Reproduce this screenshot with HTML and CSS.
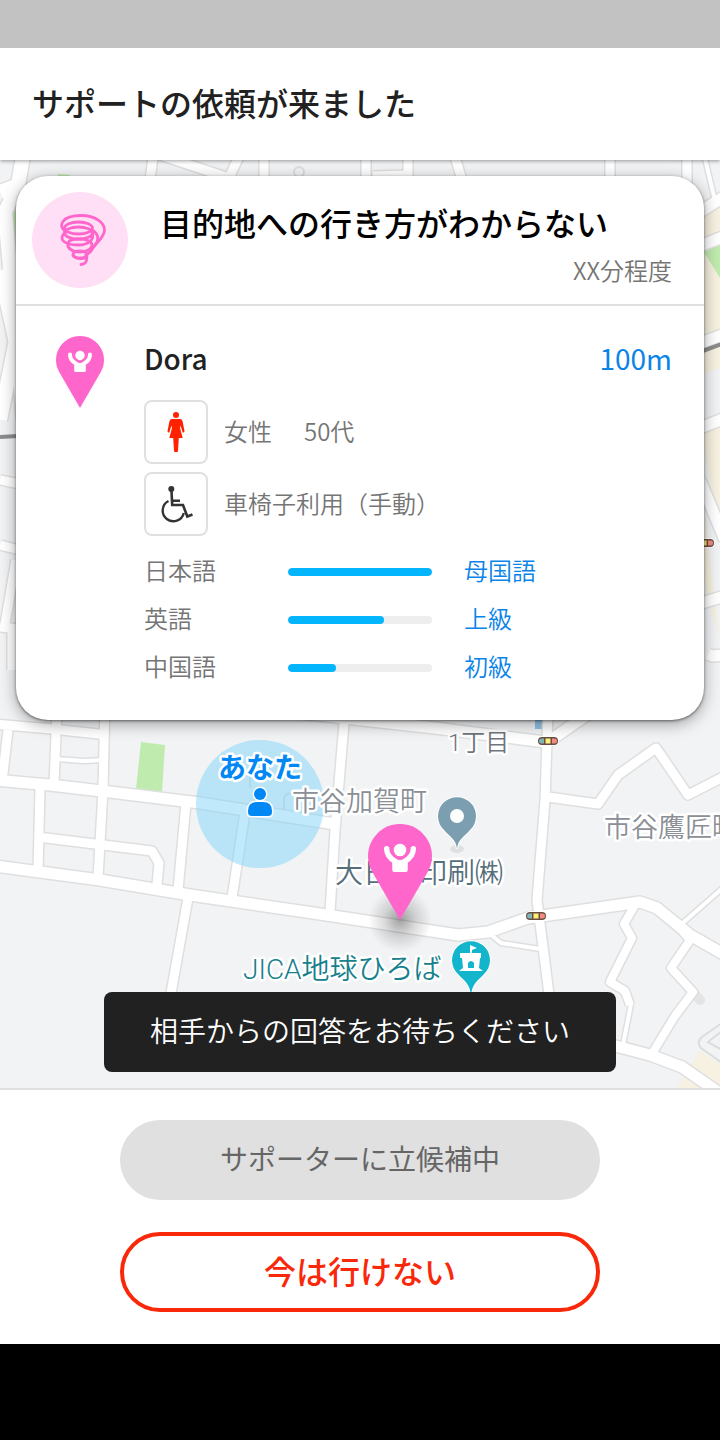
FILE: index.html
```html
<!DOCTYPE html>
<html lang="ja">
<head>
  <meta charset="UTF-8">
  <meta name="viewport" content="width=device-width, initial-scale=1">
  <title>サポートの依頼</title>
  <link rel="stylesheet" href="styles.css">
</head>
<body>
  <div class="status-bar"></div>
  <header class="app-bar">
    <h1>サポートの依頼が来ました</h1>
  </header>

  <main class="map">
    <svg class="map-canvas" viewBox="0 160 720 928" preserveAspectRatio="xMidYMid slice">
      <defs>
        <radialGradient id="pinShadow">
          <stop offset="0" stop-color="#000" stop-opacity=".36"/>
          <stop offset=".5" stop-color="#000" stop-opacity=".14"/>
          <stop offset="1" stop-color="#000" stop-opacity="0"/>
        </radialGradient>
        <symbol id="pin" viewBox="0 0 48 72">
          <path d="M3.2 36A24 24 0 1 1 44.8 36L24 72Z" fill="#ff66cc"/>
          <circle cx="24" cy="19.5" r="4.7" fill="#fff"/>
          <path d="M14 18.5C14 23.5 17 26 20.5 28M34 18.5C34 23.5 31 26 27.5 28" fill="none" stroke="#fff" stroke-width="4" stroke-linecap="round"/>
          <path d="M18.2 26Q24 28 29.8 26V34.5Q29.8 36 28.3 36H19.7Q18.2 36 18.2 34.5Z" fill="#fff"/>
        </symbol>
        <g id="signal">
          <rect x="-10" y="-4" width="20" height="8" rx="4" fill="#6b4c40" stroke="#fff" stroke-width="2" paint-order="stroke"/>
          <path d="M-4 -2.5H-6.5A2.5 2.5 0 0 0 -6.5 2.5H-4Z" fill="#80b5b5"/>
          <rect x="-2.5" y="-2.5" width="5" height="5" fill="#fff176"/>
          <path d="M4 -2.5H6.5A2.5 2.5 0 0 1 6.5 2.5H4Z" fill="#f28b82"/>
        </g>
        <g id="roads">
          <!-- upper edge -->
          <path class="w16" d="M24 150L18 185L5 212L24 420M0 192L16 186M0 270L24 380M24 300L0 420"/>
          <path class="w10" d="M154 150L150 180M160 155L235 180M242 150L228 180M264 150V180M366 150V180M408 150V180M373 176L408 175M453 150L462 180M610 150V180M687 150V200"/>
          <path class="w5" d="M703 150L716 205"/>
          <path class="w12" d="M695 215L725 196M695 248L725 236M695 345L725 334M695 430L725 418M700 480L725 540M695 605L725 596"/>
          <path class="w12" d="M708 654L712 656L725 655"/>
          <path class="w10" d="M0 480L20 484M0 545L20 550M16 560L4 630M0 627L20 629M12 632V670"/>
          <!-- left blocks -->
          <path class="w10" d="M-5 724L52 729L108 735M8 730L2 782M57 710L54 785M105 700L103 790L98 878"/>
          <path class="w5" d="M56 759L84 761L104 760"/>
          <path class="w10" d="M40 788L38 870M38 837L152 851L159 863L157 885"/>
          <path class="w10" d="M186 803L178 890M245 812L232 898M346 700L335 830L330 912M188 898L168 1010"/>
          <path class="w12" d="M-5 780L50 785L110 792L200 803L335 824"/>
          <path class="w12" d="M-5 866L100 880L190 895L320 914L458 935L488 932L528 918L640 902L657 908L690 935L725 955"/>
          <!-- right blocks -->
          <path class="w12" d="M290 712L435 728L545 742M548 742L588 714"/>
          <path class="w10" d="M548 710L545 800L537 900L551 1010"/>
          <path class="w10" d="M548 797L598 804L618 775L656 748L688 795L725 776"/>
          <path class="w5" d="M490 934L501 943L540 949M725 886L677 928L690 943M631 1004L623 1045"/>
          <path class="w8" d="M635 905L624 924L632 938L610 982L625 991L630 1005M690 940L671 968L693 992L675 1016L653 1052"/>
          <path class="w12" d="M600 1042L650 1055L682 1067L725 1097"/>
        </g>
      </defs>

      <rect y="160" width="720" height="928" fill="#f1f3f5"/>
      <path class="field" d="M700 205L720 195V425L700 430ZM700 430L720 427V530ZM700 480L720 640L700 570ZM700 1051L720 1064V1088H677Z"/>
      <path fill="#f1f3f5" d="M700 375L720 368V418L700 420Z"/>
      <path class="park" d="M141 742L165 745L162 792L136 789ZM704 252L720 245V278ZM10 212L17 210V240H14ZM58 174L70 175V180H58Z"/>
      <path class="water" d="M535 712H543V729H535Z"/>
      <path class="lot" d="M250 788V776Q252 770 258 774M284 811V798Q286 792 292 794"/>
      <path class="cul" d="M693 992L700 1000"/>
      <path class="lot" d="M722 1023L702 1037Q696 1042 701 1048L722 1063V1050L708 1042L722 1031"/>
      <use class="road-edge" href="#roads"/>
      <use class="road-fill" href="#roads"/>
      <circle cx="299" cy="172" r="5" class="lot"/>
      <path class="rail" d="M0 437L18 436M700 352L722 344"/>

      <use href="#signal" x="548" y="741"/>
      <use href="#signal" x="536" y="916"/>
      <use href="#signal" x="704" y="543"/>

      <circle cx="260" cy="804" r="64" fill="#81d4fa" fill-opacity=".5"/>

      <ellipse cx="457" cy="849" rx="7" ry="4" fill="#000" fill-opacity=".08"/>
      <path class="poi" fill="#7b9eb0" d="M457 849C456 839 450 837 444 830A19 19 0 1 1 470 830C464 837 458 839 457 849Z"/>
      <circle cx="457" cy="816" r="7" fill="#fff"/>

      <path class="poi" fill="#12b5cb" d="M471 996C470 983 464 981 458 974A19 19 0 1 1 484 974C478 981 472 983 471 996Z"/>
      <path fill="#fff" d="M470 945L477 948L472 950V953H481V958H480L479 968L483 971H459L463 968L462 958H460V953H470Z"/>
      <path fill="#12b5cb" d="M468 968V963Q471 959 474 963V968Z"/>

      <text class="place small" x="448" y="751">1丁目</text>
      <text class="place area" x="292" y="811">市谷加賀町</text>
      <text class="place area" x="604" y="837">市谷鷹匠町</text>
      <text class="place company" x="335" y="883">大日本印刷㈱</text>
      <text class="place jica" x="243" y="979">JICA地球ひろば</text>

      <circle cx="400" cy="920" r="32" fill="url(#pinShadow)"/>
      <use href="#pin" x="368" y="824" width="64" height="96"/>

      <text class="you" x="260" y="778" text-anchor="middle">あなた</text>
      <g class="me">
        <circle cx="260" cy="794" r="6"/>
        <path d="M248 811Q248 802 257 802H263Q272 802 272 811V812Q272 816 268 816H252Q248 816 248 812Z"/>
      </g>
    </svg>

    <section class="card">
      <div class="card-head">
        <svg class="trouble-icon" viewBox="0 0 96 96">
          <circle cx="48" cy="48" r="48" fill="#ffdff5"/>
          <g fill="none" stroke="#ff66cc" stroke-width="2.8" stroke-linecap="round">
            <path d="M34 40C25 34 30 23.500 49 23.500C64 23.500 72.500 31 72.500 38C72.500 45 65 50 61 56C59 60 56 62 54 63"/>
            <ellipse cx="46.500" cy="36" rx="14" ry="6"/>
            <ellipse cx="46.500" cy="41" rx="14" ry="6"/>
            <path d="M33 41C27 45 29 53 46 53C58 53 62 47 60.500 41"/>
            <path d="M60 38C67 42 68 49 61 55"/>
            <path d="M36 52C35 56 40 60 48 60C56 60 60 56 60 53C60 49 54 47 47 47C40 47 36 49 36 52"/>
            <ellipse cx="48" cy="62.500" rx="7" ry="3.500"/>
            <path d="M41 63C42 67 51 67.500 55 65M54 63C56 70 53 72 49 72.500"/>
          </g>
        </svg>
        <div class="card-title">
          <h2>目的地への行き方がわからない</h2>
          <p>XX分程度</p>
        </div>
      </div>

      <div class="card-body">
        <svg class="user-pin"><use href="#pin"/></svg>
        <div class="profile">
          <div class="name-row">
            <strong>Dora</strong>
            <span class="distance">100m</span>
          </div>
          <ul class="traits">
            <li>
              <span class="trait-icon">
                <svg viewBox="0 0 64 64" fill="#ff2200">
                  <circle cx="32" cy="15" r="3"/>
                  <path d="M28 19H36Q38 19 38.5 21L40.5 31Q40.5 33 38.7 32.5L36.5 25.5L36 28L38.7 38H34.8L34 51Q34 52 33 52H31Q30 52 30 51L29.2 38H25.3L28 28L27.5 25.5L25.3 32.5Q23.5 33 23.5 31L25.5 21Q26 19 28 19Z"/>
                </svg>
              </span>
              <span class="trait">女性</span>
              <span class="trait age">50代</span>
            </li>
            <li>
              <span class="trait-icon">
                <svg viewBox="0 0 64 64" fill="none" stroke="#333" stroke-width="2.4">
                  <circle cx="27.3" cy="17" r="3" fill="#333" stroke="none"/>
                  <path d="M27.5 19L28.2 33H39L43.3 44.5L48.5 42.5M28 28.7H36" stroke-width="2.6"/>
                  <path d="M24.5 29A10.7 10.7 0 1 0 39.8 41"/>
                </svg>
              </span>
              <span class="trait">車椅子利用（手動）</span>
            </li>
          </ul>
          <ul class="languages">
            <li>
              <label for="ja">日本語</label>
              <progress id="ja" max="3" value="3"></progress>
              <span class="level">母国語</span>
            </li>
            <li>
              <label for="en">英語</label>
              <progress id="en" max="3" value="2"></progress>
              <span class="level">上級</span>
            </li>
            <li>
              <label for="zh">中国語</label>
              <progress id="zh" max="3" value="1"></progress>
              <span class="level">初級</span>
            </li>
          </ul>
        </div>
      </div>
    </section>

    <div class="toast" role="status">相手からの回答をお待ちください</div>
  </main>

  <footer class="actions">
    <button class="btn btn-waiting" type="button" disabled>サポーターに立候補中</button>
    <button class="btn btn-decline" type="button">今は行けない</button>
  </footer>
  <div class="nav-bar"></div>
</body>
</html>
```
FILE: styles.css
```css
* { box-sizing: border-box; }
body {
  margin: 0;
  min-height: 100vh;
  display: flex;
  flex-direction: column;
  background: #fff;
  color: #212121;
  font-family: "Noto Sans CJK JP", sans-serif;
  font-size: 24px;
  font-weight: 350;
}
h1, h2, p, ul { margin: 0; padding: 0; }
ul { list-style: none; }

.status-bar { position: relative; z-index: 2; height: 48px; background: #c2c2c2; }
.nav-bar { height: 96px; background: #000; }

.app-bar {
  position: relative;
  z-index: 1;
  padding: 30px 32px 34px;
  background: #fff;
  box-shadow: 0 1px 4px rgba(0, 0, 0, 0.4);
}
.app-bar h1 { font-size: 32px; line-height: 48px; font-weight: 500; }

/* map */
.map {
  position: relative;
  flex: 1;
  display: flex;
  flex-direction: column;
  justify-content: space-between;
  gap: 16px;
  padding: 16px;
  overflow: hidden;
}
.map-canvas { position: absolute; top: 0; left: 0; width: 100%; height: 100%; }
#roads path { fill: none; stroke-linejoin: round; stroke-width: calc(var(--w) + var(--edge)); }
.w5 { --w: 4px; }
.w8 { --w: 8px; }
.w10 { --w: 9px; }
.w12 { --w: 11px; }
.w16 { --w: 14px; }
.road-edge { --edge: 3px; stroke: #dfdfdf; }
.road-fill { --edge: 0px; stroke: #fff; }
.field { fill: #f6f1e0; }
.park { fill: #c0ebae; }
.water { fill: #90c4ea; }
.lot { fill: none; stroke: #dcdcdc; stroke-width: 2px; }
.cul { stroke: #e4e4e4; stroke-width: 10px; stroke-linecap: round; }
.rail { stroke: #8c8c8c; stroke-width: 4px; }
.poi { stroke: #fff; stroke-width: 2px; paint-order: stroke; }
.place {
  font-family: Roboto, "Noto Sans CJK JP", sans-serif;
  font-weight: 350;
  stroke: #fff;
  stroke-width: 5px;
  stroke-linejoin: round;
  paint-order: stroke;
}
.small { font-size: 24px; fill: #70757c; }
.area { font-size: 27px; fill: #8b8f96; }
.company { font-size: 28px; fill: #546e7a; }
.jica { font-size: 28px; fill: #16808c; }
.you {
  font-size: 28px;
  font-weight: 700;
  fill: #0288f5;
  stroke: #fff;
  stroke-width: 5px;
  stroke-linejoin: round;
  paint-order: stroke;
}
.me { fill: #0288f5; stroke: #fff; stroke-width: 3px; paint-order: stroke; }

/* request card */
.card {
  position: relative;
  background: #fff;
  border-radius: 32px;
  box-shadow: 0 1px 3px rgba(0, 0, 0, 0.5), 0 4px 16px rgba(0, 0, 0, 0.35);
}
.card-head {
  display: flex;
  gap: 32px;
  padding: 16px 32px 16px 16px;
  border-bottom: 2px solid #e0e0e0;
}
.trouble-icon { flex: none; width: 96px; height: 96px; }
.card-title { flex: 1; }
.card-title h2 { font-size: 32px; line-height: 60px; font-weight: 500; color: #000; }
.card-title p { margin-top: 2px; line-height: 32px; text-align: right; color: #757575; }
.card-body { display: flex; gap: 40px; padding: 30px 32px 28px 40px; }
.user-pin { flex: none; width: 48px; height: 72px; }
.profile { flex: 1; }
.name-row {
  display: flex;
  justify-content: space-between;
  margin-bottom: 20px;
  font-size: 28px;
  line-height: 44px;
}
.name-row strong { font-weight: 500; }
.distance { color: #0a84e8; font-weight: 400; }
.traits { display: grid; gap: 8px; color: #757575; }
.traits li { display: flex; align-items: center; gap: 16px; }
.trait { padding-bottom: 4px; }
.trait-icon {
  width: 64px;
  height: 64px;
  border: 2px solid #e0e0e0;
  border-radius: 8px;
}
.trait-icon svg { display: block; margin: -2px; width: 64px; height: 64px; }
.age { margin-left: 16px; }
.languages { margin-top: 12px; color: #757575; }
.languages li {
  display: grid;
  grid-template-columns: 112px 144px 1fr;
  align-items: center;
  column-gap: 32px;
  line-height: 44px;
}
.languages label, .level { padding-bottom: 4px; }
.languages progress {
  appearance: none;
  width: 100%;
  height: 8px;
  border: 0;
  border-radius: 4px;
  background: #eee;
  overflow: hidden;
}
.languages progress::-webkit-progress-bar { background: #eee; border-radius: 4px; }
.languages progress::-webkit-progress-value { background: #03b5fd; border-radius: 4px; }
.level { color: #0a84e8; }

.toast {
  position: relative;
  align-self: center;
  width: 512px;
  max-width: 100%;
  padding: 14px 16px 18px;
  border-radius: 8px;
  background: #212121;
  color: #fff;
  font-size: 28px;
  line-height: 48px;
  text-align: center;
}

/* bottom buttons */
.actions {
  display: flex;
  flex-direction: column;
  align-items: center;
  gap: 32px;
  padding: 30px 16px 32px;
  border-top: 2px solid #e0e0e0;
}
.btn {
  width: 480px;
  max-width: 100%;
  height: 80px;
  padding: 0 0 4px;
  border: 0;
  border-radius: 40px;
  font-family: inherit;
}
.btn-waiting { background: #e0e0e0; color: #666; font-size: 28px; font-weight: 400; }
.btn-decline {
  border: 4px solid #f9280a;
  background: #fff;
  color: #f9280a;
  font-size: 32px;
  font-weight: 500;
}
```
